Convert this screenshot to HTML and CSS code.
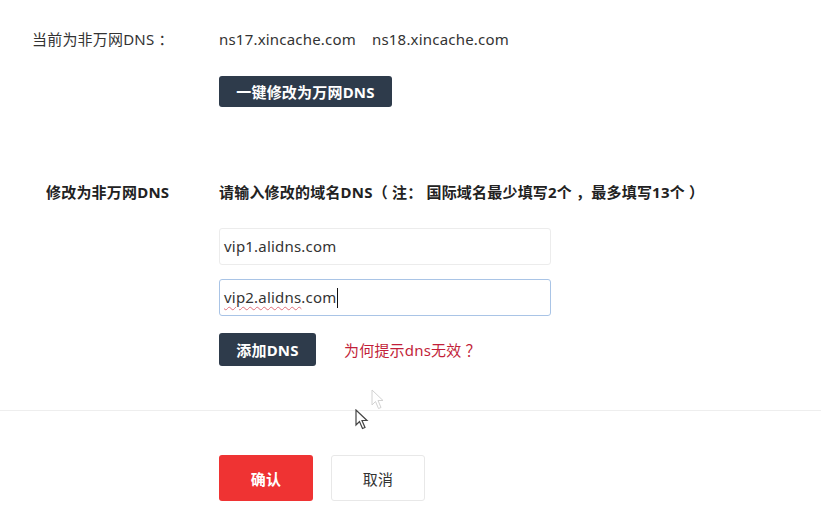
FILE: index.html
```html
<!DOCTYPE html>
<html lang="zh-CN">
<head>
<meta charset="utf-8">
<link rel="stylesheet" href="styles.css">
</head>
<body>
<div class="page">
  <section class="current">
    <div class="row">
      <div class="label">当前为非万网DNS ：</div>
      <div class="content servers"><span>ns17.xincache.com</span><span>ns18.xincache.com</span></div>
    </div>
    <div class="row">
      <div class="label"></div>
      <div class="content"><button class="btn btn-dark btn-wide">一键修改为万网DNS</button></div>
    </div>
  </section>

  <section class="custom">
    <div class="row">
      <div class="label label-bold">修改为非万网DNS</div>
      <div class="content">
        <div class="hint">请输入修改的域名DNS（ 注： 国际域名最少填写2个 ，最多填写13个 ）</div>
        <div class="field">vip1.alidns.com</div>
        <div class="field field-focus"><span class="spell">vip2.alidns</span>.com<span class="caret"></span></div>
        <div class="actions">
          <button class="btn btn-dark btn-add">添加DNS</button>
          <a class="help">为何提示dns无效 ？</a>
        </div>
      </div>
    </div>
  </section>

  <hr class="divider">

  <section class="footer">
    <div class="row">
      <div class="label"></div>
      <div class="content footer-btns">
        <button class="btn btn-red">确认</button>
        <button class="btn btn-plain">取消</button>
      </div>
    </div>
  </section>

  <svg class="cursor cursor-ghost" width="14" height="22" viewBox="0 0 14 22"><path d="M1 1 L1 16 L4.5 12.5 L7.5 19.5 L10 18.5 L7 11.5 L12 11.5 Z" fill="#fff" stroke="#c8c8c8" stroke-width="1"/></svg>
  <svg class="cursor cursor-main" width="14" height="22" viewBox="0 0 14 22"><path d="M1 1 L1 16 L4.5 12.5 L7.5 19.5 L10 18.5 L7 11.5 L12 11.5 Z" fill="#fff" stroke="#444" stroke-width="1.2"/></svg>
</div>
</body>
</html>
```

FILE: styles.css
```css
* { box-sizing: border-box; }
html, body { margin: 0; background: #fff; }
body {
  font-family: "Noto Sans", "Noto Sans CJK SC", sans-serif;
  font-size: 15px;
  letter-spacing: 0.2px;
  color: #333;
}
.page { position: relative; width: 821px; height: 505px; overflow: hidden; }
.row { display: flex; }
.label { width: 219px; flex: none; padding-left: 32px; line-height: 20px; }
.label-bold { padding-left: 46px; font-weight: bold; color: #222; }
.content { flex: 1; }

.current { padding-top: 29px; }
.servers { display: flex; gap: 16px; line-height: 20px; color: #333; }
.current .row + .row { margin-top: 27px; }

.btn {
  font-family: inherit;
  font-size: 15px;
  letter-spacing: 0.2px;
  border: none;
  border-radius: 3px;
  padding: 0;
  cursor: pointer;
}
.btn-dark { background: #2e3b4b; color: #fff; font-weight: bold; }
.btn-wide { width: 173px; height: 31px; }
.btn-add { width: 97px; height: 33px; }

.custom { margin-top: 75px; }
.hint { font-weight: bold; line-height: 20px; color: #222; }
.field {
  width: 332px;
  height: 37px;
  border: 1px solid #ececec;
  border-radius: 3px;
  padding-left: 4px;
  line-height: 35px;
  color: #333;
  margin-top: 26px;
}
.field-focus { margin-top: 14px; border-color: #a9c4e6; display: flex; align-items: center; }
.spell { text-decoration: underline wavy #e0707a; text-decoration-thickness: 1px; text-underline-offset: 3px; }
.caret { display: inline-block; width: 1px; height: 20px; background: #111; margin-left: 1px; }
.actions { display: flex; align-items: center; gap: 28px; margin-top: 17px; }
.help { color: #c21f3a; line-height: 20px; }

.divider { border: none; border-top: 1px solid #eeeeee; margin: 44px 0 0; }

.footer { margin-top: 44px; }
.footer-btns { display: flex; gap: 18px; }
.btn-red { width: 94px; height: 46px; background: #ef3333; color: #fff; font-weight: bold; }
.btn-plain { width: 94px; height: 46px; background: #fff; border: 1px solid #e8e8e8; color: #333; }

.cursor { position: absolute; }
.cursor-ghost { left: 371px; top: 389px; opacity: 0.8; }
.cursor-main { left: 355px; top: 409px; }
```
